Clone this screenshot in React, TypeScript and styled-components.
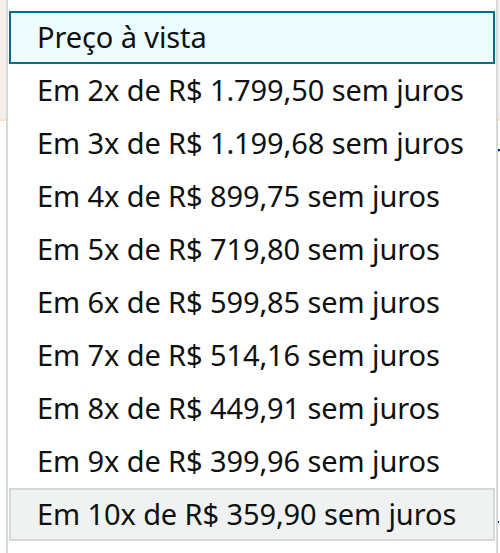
import React from "react"
import styled, { createGlobalStyle } from "styled-components"

const GlobalStyle = createGlobalStyle`
  html, body {
    margin: 0;
    padding: 0;
    background: #fff;
  }
  body {
    font-family: "Noto Sans", "Open Sans", sans-serif;
    color: #0f1111;
  }
`

const Page = styled.div`
  position: relative;
  width: 500px;
  height: 553px;
  overflow: hidden;
  background: #fff;
`

const HeaderBand = styled.div`
  height: 119px;
  background: #f6f0ec;
  border-bottom: 2px solid #fbe3cc;
`

const BehindText = styled.div<{ $gap: number }>`
  display: flex;
  justify-content: flex-end;
  margin-top: ${(p) => p.$gap}px;
  padding-right: 0;
  font-size: 28px;
  line-height: 30px;
  color: #0f1111;
`

const Dropdown = styled.ul`
  position: absolute;
  top: -2px;
  left: 6px;
  width: 486px;
  margin: 0;
  padding: 11px 1px 0;
  list-style: none;
  background: #fff;
  border: 2px solid #d5d9d9;
  height: 560px;
`

const Option = styled.li<{ $selected?: boolean; $hover?: boolean }>`
  box-sizing: border-box;
  height: 53px;
  display: flex;
  align-items: center;
  padding: 0 0 2px 26px;
  font-size: 29px;
  letter-spacing: -0.1px;
  white-space: nowrap;
  border: 2px solid
    ${(p) => (p.$selected ? "#007185" : p.$hover ? "#d5d9d9" : "transparent")};
  background: ${(p) =>
    p.$selected ? "#edfdff" : p.$hover ? "#f0f2f2" : "transparent"};
  color: #0f1111;
`

const options = [
  "Preço à vista",
  "Em 2x de R$ 1.799,50 sem juros",
  "Em 3x de R$ 1.199,68 sem juros",
  "Em 4x de R$ 899,75 sem juros",
  "Em 5x de R$ 719,80 sem juros",
  "Em 6x de R$ 599,85 sem juros",
  "Em 7x de R$ 514,16 sem juros",
  "Em 8x de R$ 449,91 sem juros",
  "Em 9x de R$ 399,96 sem juros",
  "Em 10x de R$ 359,90 sem juros",
]

const App = () => {
  return (
    <Page>
      <GlobalStyle />
      <HeaderBand />
      <BehindText $gap={22}>T</BehindText>
      <BehindText $gap={330}>-</BehindText>
      <Dropdown>
        {options.map((label, i) => (
          <Option key={label} $selected={i === 0} $hover={i === options.length - 1}>
            {label}
          </Option>
        ))}
      </Dropdown>
    </Page>
  )
}

export default App
